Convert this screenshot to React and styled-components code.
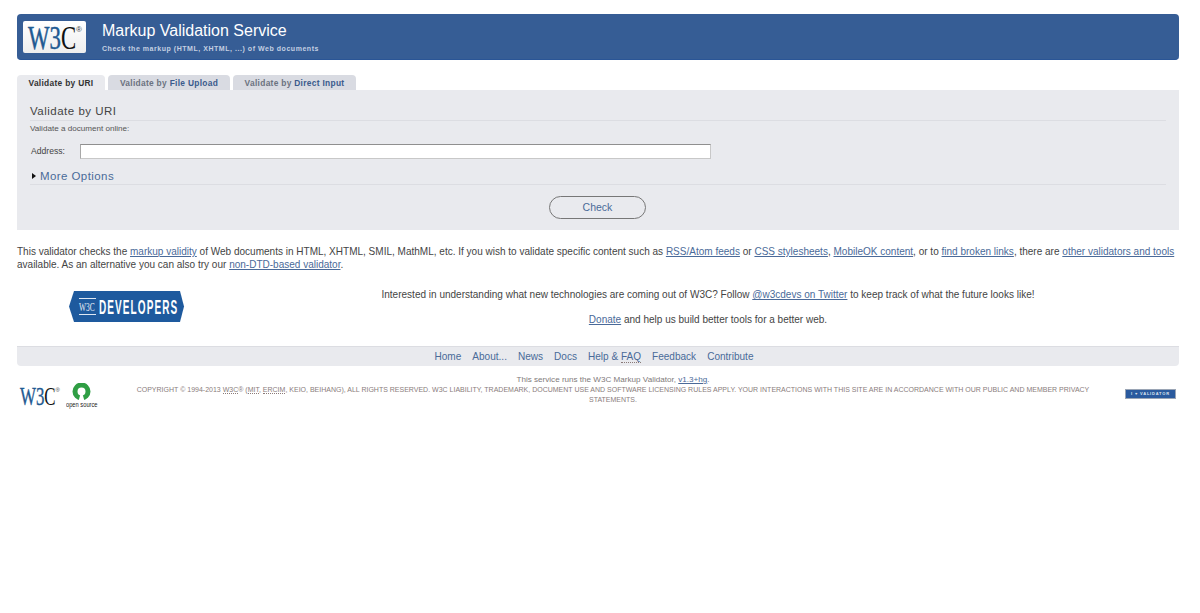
import React from 'react'
import styled, { createGlobalStyle } from 'styled-components'

const GlobalStyle = createGlobalStyle`
  html, body { margin: 0; padding: 0; background: #fff; }
  body { font-family: "Liberation Sans", Arial, sans-serif; color: #444; }
`

const Page = styled.div`
  padding: 14px 21px 0 17px;
`

const Banner = styled.div`
  height: 46px;
  box-sizing: border-box;
  background: #365d95;
  border-bottom: 1px solid #2a5596;
  border-radius: 4px;
  padding: 7px 6px;
  display: flex;
  gap: 16px;
  align-items: flex-start;
`

const LogoBox = styled.div`
  width: 63px;
  height: 32px;
  background: linear-gradient(#ffffff, #eeeeee);
  border-radius: 2px;
  display: flex;
  align-items: center;
  justify-content: center;
`

const BannerText = styled.div`
  display: flex;
  flex-direction: column;
  color: #fff;
`

const Title = styled.div`
  font-size: 16px;
  line-height: 18px;
  margin-top: 1px;
`

const Subtitle = styled.div`
  font-size: 7px;
  font-weight: bold;
  letter-spacing: 0.54px;
  line-height: 9px;
  margin-top: 4px;
  color: #c4d0e2;
`

const Tabs = styled.div`
  display: flex;
  gap: 3px;
  margin-top: 15px;
  height: 15px;
`

const Tab = styled.div`
  width: ${p => p.$width}px;
  background: ${p => (p.$active ? '#e9eaee' : '#d9dbe2')};
  border-radius: 4px 4px 0 0;
  font-size: 8.4px;
  font-weight: bold;
  letter-spacing: 0.3px;
  line-height: 17px;
  text-align: center;
  color: ${p => (p.$active ? '#333' : '#6b7280')};

  b { color: ${p => (p.$active ? '#333' : '#3a5a8c')}; }
`

const Panel = styled.div`
  height: 140px;
  box-sizing: border-box;
  background: #e9eaee;
  padding: 14px 13px 0 13px;
`

const PanelTitle = styled.div`
  font-size: 11.5px;
  letter-spacing: 0.5px;
  line-height: 15px;
  color: #444;
  border-bottom: 1px solid #dcdde2;
  padding-bottom: 1px;
`

const Hint = styled.div`
  font-size: 8.1px;
  line-height: 10px;
  margin-top: 3px;
  color: #555;
`

const AddressRow = styled.div`
  display: flex;
  align-items: center;
  margin-top: 9px;
  height: 16px;
  padding-left: 1px;
`

const Label = styled.label`
  font-size: 8.6px;
  width: 49px;
  color: #444;
`

const AddressInput = styled.div`
  width: 631px;
  height: 15px;
  box-sizing: border-box;
  background: #fff;
  border: 1px solid #c8c8c8;
  border-top-color: #8f8f8f;
  border-left-color: #a8a8a8;
`

const OptionsRow = styled.div`
  display: flex;
  align-items: center;
  gap: 4px;
  height: 16px;
  margin-top: 9px;
  padding-left: 2px;
  border-bottom: 1px solid #dcdde2;
  font-size: 11.5px;
  letter-spacing: 0.42px;
  color: #4a6a99;
`

const Arrow = styled.span`
  width: 0;
  height: 0;
  border-left: 4px solid #111;
  border-top: 3.5px solid transparent;
  border-bottom: 3.5px solid transparent;
`

const CheckRow = styled.div`
  display: flex;
  justify-content: center;
  margin-top: 11px;
  padding-right: 1px;
`

const CheckButton = styled.div`
  width: 97px;
  height: 23px;
  box-sizing: border-box;
  border: 1px solid #777;
  border-radius: 12px;
  background: #e9eaee;
  font-size: 10.5px;
  line-height: 21px;
  text-align: center;
  color: #4a6a99;
`

const Intro = styled.p`
  margin: 15px 0 0;
  font-size: 10.03px;
  line-height: 13px;
  color: #444;
`

const Link = styled.a`
  color: #4a6a99;
  text-decoration: underline;
`

const Abbr = styled.span`
  border-bottom: 1px dotted #8a7a78;
`

const Promo = styled.div`
  display: flex;
  margin-top: 17px;
  height: 58px;
`

const PromoLogo = styled.div`
  width: 220px;
  padding-left: 52px;
  box-sizing: border-box;
  padding-top: 3px;
`

const PromoText = styled.div`
  flex: 1;
  font-size: 10.03px;
  text-align: center;
  color: #444;

  p { margin: 0 0 12px; line-height: 13px; }
`

const Nav = styled.div`
  height: 20px;
  background: #e9eaee;
  border-top: 1px solid #dcdde2;
  box-sizing: border-box;
  border-radius: 0 0 4px 4px;
  padding-right: 8px;
  display: flex;
  justify-content: center;
  gap: 11px;
  font-size: 10.05px;
  line-height: 20px;
  color: #4a6a99;
`

const Footer = styled.div`
  display: flex;
  margin-top: 9px;
`

const FooterLogos = styled.div`
  width: 118px;
  display: flex;
  align-items: flex-start;
  gap: 3px;
  padding-top: 8px;

  svg:first-child { margin-top: 2px; }
`

const FooterText = styled.div`
  flex: 1;
  font-size: 7px;
  line-height: 10px;
  text-align: center;
  color: #8a7d7c;
`

const Version = styled.div`
  font-size: 8.1px;
  color: #807a7a;
`

const Badge = styled.div`
  width: 51px;
  height: 10px;
  margin: 14px 3px 0 34px;
  box-sizing: border-box;
  background: #2a5a9e;
  border: 1px solid #9aa5b5;
  color: #dfe6f0;
  font-size: 4px;
  font-weight: bold;
  letter-spacing: 0.8px;
  line-height: 8px;
  text-align: center;
`

const W3cMark = ({ width, height }) => (
  <svg width={width} height={height} viewBox="0 0 62 31">
    <text transform="translate(4 27) scale(0.69 1)" fontFamily="Liberation Serif" fontSize="33" fill="#1f5a92" stroke="#1f5a92" strokeWidth="0.5">
      W3<tspan fill="#111" stroke="none">C</tspan>
    </text>
    <text x="52" y="10" fontFamily="Liberation Sans" fontSize="8" fill="#444">®</text>
  </svg>
)

const DevelopersMark = () => (
  <svg width="116" height="32" viewBox="0 0 116 32">
    <polygon points="5,0 111,0 115,15.5 111,31 5,31 0,15.5" fill="#1e5a9e" />
    <path d="M10 7.5h17M10 23.5h17" stroke="#dfe8f3" strokeWidth="1" />
    <text transform="translate(10 20) scale(0.62 1)" fontFamily="Liberation Serif" fontSize="12" fill="#e5edf6">W3C</text>
    <text transform="translate(30 23) scale(0.5 1)" fontFamily="Liberation Sans" fontWeight="bold" fontSize="20" letterSpacing="2.2" fill="#fff">DEVELOPERS</text>
  </svg>
)

const OpenSourceMark = () => (
  <svg width="33" height="28" viewBox="0 0 33 28">
    <circle cx="15.5" cy="8.5" r="6.5" fill="none" stroke="#2f9e44" strokeWidth="5" />
    <path d="M12.5 18l2-7h2l2 7z" fill="#fff" />
    <text transform="translate(0 24) scale(0.82 1)" fontFamily="Liberation Sans" fontSize="7" fill="#222">open source</text>
  </svg>
)

export default function App() {
  return (
    <>
      <GlobalStyle />
      <Page>
        <Banner>
          <LogoBox><W3cMark width={62} height={31} /></LogoBox>
          <BannerText>
            <Title>Markup Validation Service</Title>
            <Subtitle>Check the markup (HTML, XHTML, ...) of Web documents</Subtitle>
          </BannerText>
        </Banner>

        <Tabs>
          <Tab $active $width={88}>Validate by URI</Tab>
          <Tab $width={122}>Validate by <b>File Upload</b></Tab>
          <Tab $width={123}>Validate by <b>Direct Input</b></Tab>
        </Tabs>
        <Panel>
          <PanelTitle>Validate by URI</PanelTitle>
          <Hint>Validate a document online:</Hint>
          <AddressRow>
            <Label>Address:</Label>
            <AddressInput />
          </AddressRow>
          <OptionsRow><Arrow />More Options</OptionsRow>
          <CheckRow><CheckButton>Check</CheckButton></CheckRow>
        </Panel>

        <Intro>
          This validator checks the <Link>markup validity</Link> of Web documents in HTML, XHTML, SMIL, MathML, etc. If you wish to validate specific content such as <Link>RSS/Atom feeds</Link> or <Link>CSS stylesheets</Link>, <Link>MobileOK content</Link>, or to <Link>find broken links</Link>, there are <Link>other validators and tools</Link> available. As an alternative you can also try our <Link>non-DTD-based validator</Link>.
        </Intro>

        <Promo>
          <PromoLogo><DevelopersMark /></PromoLogo>
          <PromoText>
            <p>Interested in understanding what new technologies are coming out of W3C? Follow <Link>@w3cdevs on Twitter</Link> to keep track of what the future looks like!</p>
            <p><Link>Donate</Link> and help us build better tools for a better web.</p>
          </PromoText>
        </Promo>

        <Nav>
          <span>Home</span>
          <span>About...</span>
          <span>News</span>
          <span>Docs</span>
          <span>Help &amp; <Abbr>FAQ</Abbr></span>
          <span>Feedback</span>
          <span>Contribute</span>
        </Nav>

        <Footer>
          <FooterLogos>
            <W3cMark width={46} height={23} />
            <OpenSourceMark />
          </FooterLogos>
          <FooterText>
            <Version>This service runs the W3C Markup Validator, <Link>v1.3+hg</Link>.</Version>
            COPYRIGHT © 1994-2013 <Abbr>W3C</Abbr>® (<Abbr>MIT</Abbr>, <Abbr>ERCIM</Abbr>, KEIO, BEIHANG), ALL RIGHTS RESERVED. W3C LIABILITY, TRADEMARK, DOCUMENT USE AND SOFTWARE LICENSING RULES APPLY. YOUR INTERACTIONS WITH THIS SITE ARE IN ACCORDANCE WITH OUR PUBLIC AND MEMBER PRIVACY STATEMENTS.
          </FooterText>
          <Badge>I ♥ VALIDATOR</Badge>
        </Footer>
      </Page>
    </>
  )
}
